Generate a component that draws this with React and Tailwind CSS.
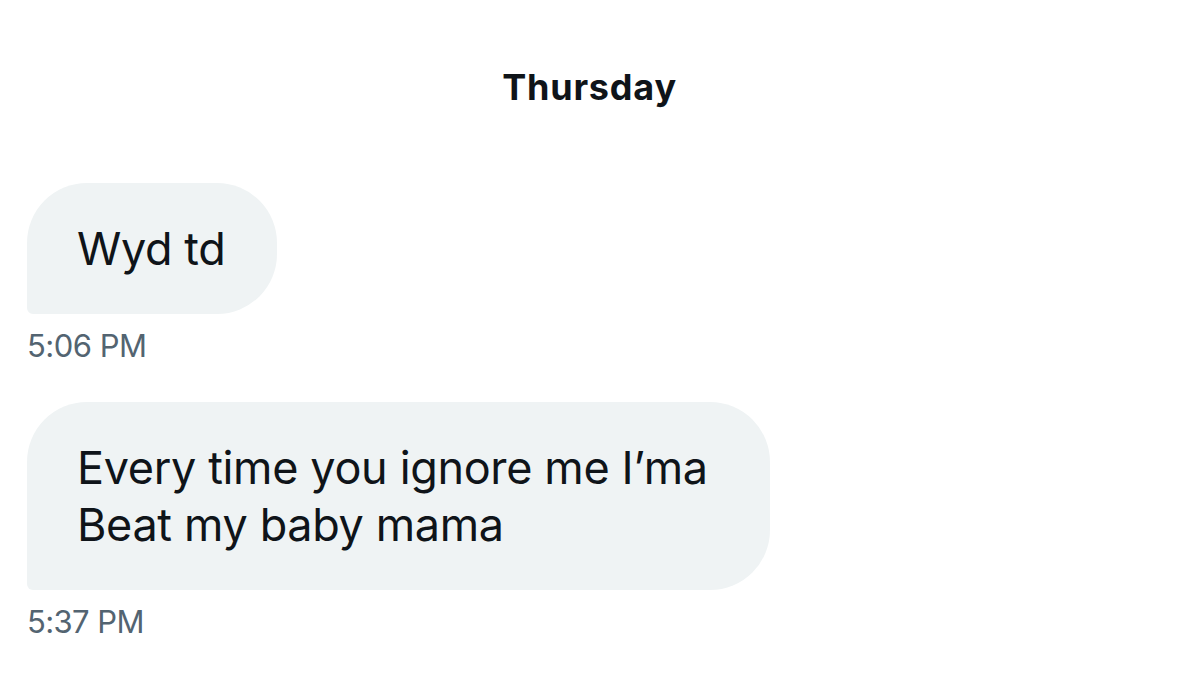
export default function App() {
  const font = { fontFamily: "Inter, Roboto, 'Liberation Sans', sans-serif" };
  return (
    <div className="w-[1179px] h-[690px] bg-white overflow-hidden" style={font}>
      <div className="pt-[65px] flex justify-center">
        <div className="text-[36px] leading-[44px] font-bold text-[#0f1419] tracking-[0.8px]">Thursday</div>
      </div>
      <div className="pl-[27px] pt-[74px] flex flex-col items-start">
        <div className="bg-[#eff3f4] rounded-[60px] rounded-bl-[6px] pl-[50px] pr-[52px] py-[37px] text-[45px] leading-[57px] text-[#0f1419] tracking-[-0.4px]">
          Wyd td
        </div>
        <div className="mt-[14px] text-[31px] leading-[36px] text-[#536471] tracking-[-0.5px]">5:06 PM</div>
        <div className="mt-[38px] bg-[#eff3f4] rounded-[60px] rounded-bl-[6px] pl-[50px] pr-[62px] py-[37px] text-[45px] leading-[57px] text-[#0f1419] tracking-[-0.35px]">
          <div>Every time you ignore me I’ma</div>
          <div>Beat my baby mama</div>
        </div>
        <div className="mt-[14px] text-[31px] leading-[36px] text-[#536471] tracking-[-0.6px]">5:37 PM</div>
      </div>
    </div>
  );
}
